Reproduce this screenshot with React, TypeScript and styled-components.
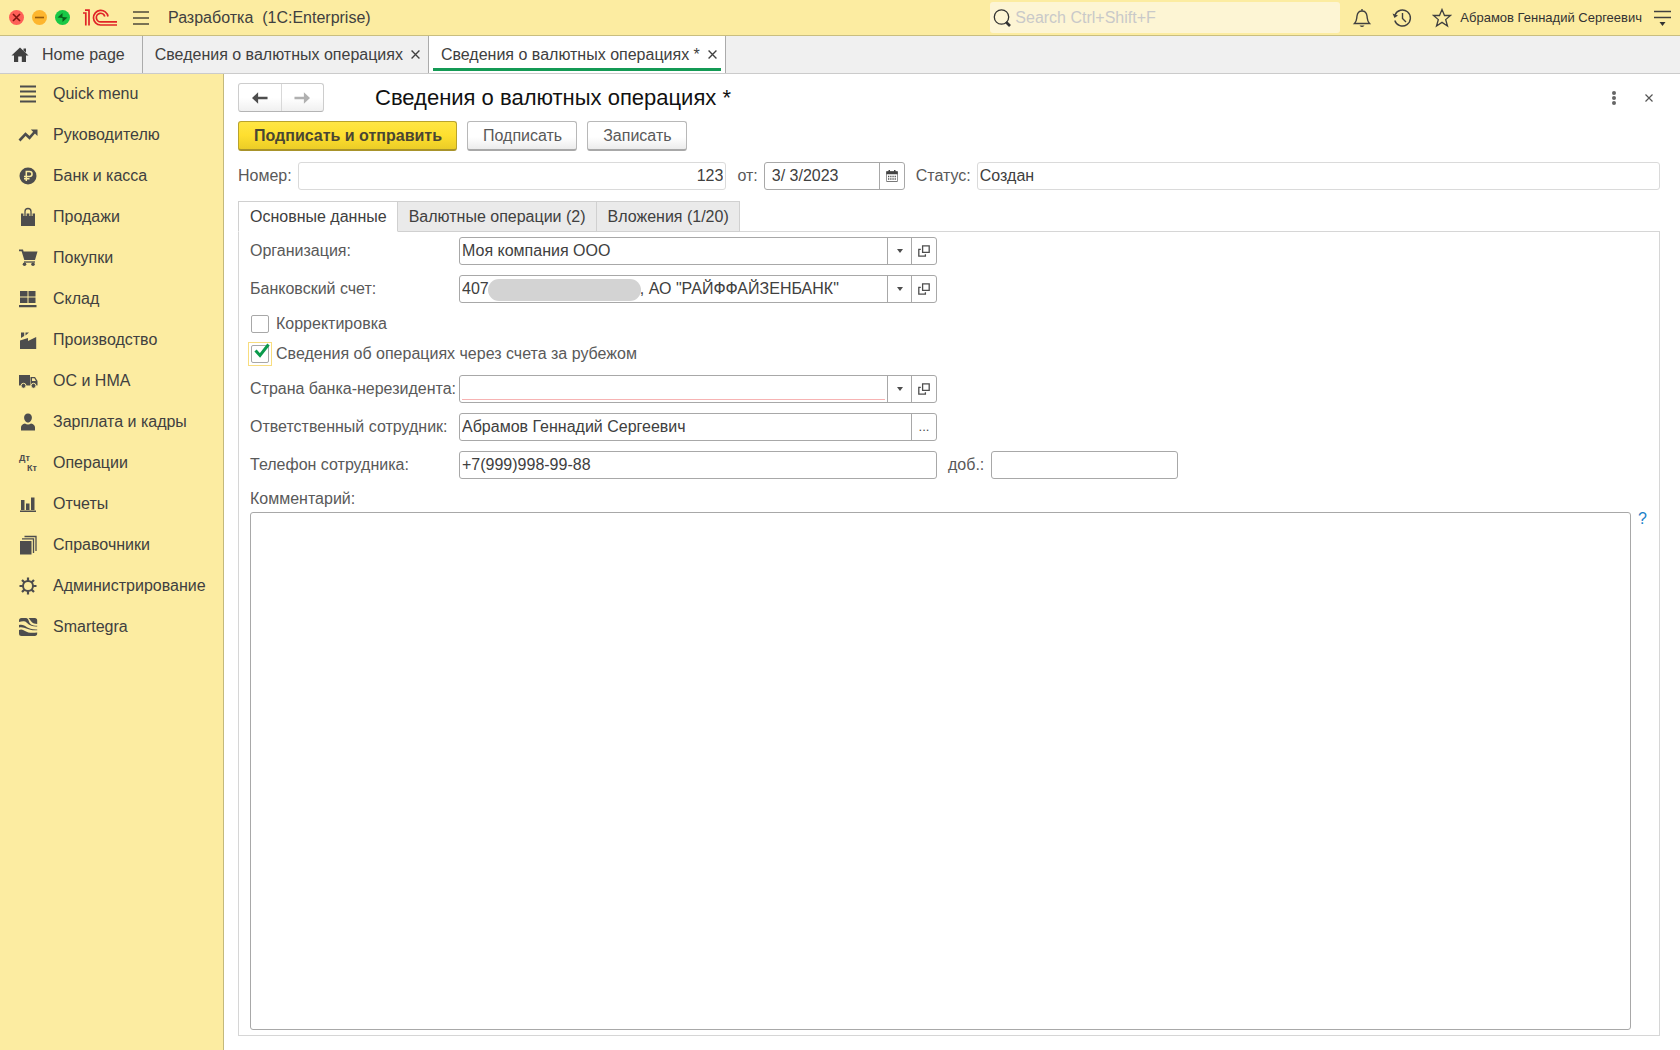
import React, { useState } from "react";
import styled, { createGlobalStyle, css } from "styled-components";

const GlobalStyle = createGlobalStyle`
  *, *::before, *::after { box-sizing: border-box; }
  body {
    margin: 0;
    background: #fff;
    color: #404040;
    font: 16px/20px "Liberation Sans", Arial, sans-serif;
  }
  button, input, select, textarea { font: inherit; color: inherit; margin: 0; }
  button { cursor: pointer; }
`;

const Shell = styled.div`
  min-height: 100vh;
  display: flex;
  flex-direction: column;
`;

/* ---------- title bar ---------- */

const TitleBar = styled.header`
  display: flex;
  align-items: center;
  height: 36px;
  padding: 0 9px;
  background: #fceca1;
  border-bottom: 1px solid #c9be80;
`;

const Lights = styled.div`
  display: flex;
  gap: 8px;
  margin-right: 13px;
`;

const Light = styled.button<{ $color: string }>`
  width: 15px;
  height: 15px;
  padding: 0;
  border: 0;
  border-radius: 50%;
  background: ${(p) => p.$color};
  svg { display: block; }
`;

const IconButton = styled.button`
  display: flex;
  align-items: center;
  justify-content: center;
  padding: 0;
  border: 0;
  background: none;
  color: #404040;
`;

const Brand = styled.div`
  display: flex;
  align-items: center;
  gap: 16px;
`;

const AppName = styled.span`
  margin-left: 3px;
  white-space: pre;
`;

const Search = styled.label`
  display: flex;
  align-items: center;
  gap: 3px;
  width: 350px;
  height: 31px;
  margin-left: auto;
  padding: 0 3px;
  border-radius: 3px;
  background: #fdf5d4;
`;

const SearchInput = styled.input`
  flex: 1;
  min-width: 0;
  padding: 0;
  border: 0;
  outline: 0;
  background: none;
  &::placeholder { color: #c9c9c9; opacity: 1; }
`;

const Tools = styled.div`
  display: flex;
  align-items: center;
  gap: 20px;
  margin: 0 8px 0 12px;
`;

const UserLink = styled.a`
  margin-right: 12px;
  font-size: 13px;
  color: #333;
  text-decoration: none;
`;

/* ---------- window tabs ---------- */

const WindowTabs = styled.nav`
  display: flex;
  height: 38px;
  background: #f0f0f0;
  border-bottom: 1px solid #cbcbcb;
`;

const WindowTab = styled.div<{ $active?: boolean }>`
  display: flex;
  align-items: center;
  gap: 8px;
  padding: 0 8px 0 12px;
  border-right: 1px solid #ababab;
  ${(p) =>
    p.$active &&
    css`
      background: linear-gradient(#149a55, #149a55) 4px 32px / calc(100% - 8px) 3px no-repeat #fff;
    `}
`;

const TabLink = styled.a`
  display: flex;
  align-items: center;
  gap: 13px;
  color: #404040;
  text-decoration: none;
  white-space: nowrap;
`;

const HomeTab = styled(WindowTab)`
  padding: 0 17px 0 11px;
`;

/* ---------- body ---------- */

const Body = styled.div`
  flex: 1;
  display: flex;
`;

const Sidebar = styled.nav`
  width: 224px;
  flex: none;
  background: #fceca1;
  border-right: 1px solid #c4b97c;
`;

const Menu = styled.ul`
  margin: -1px 0 0;
  padding: 0;
  list-style: none;
`;

const MenuLink = styled.a`
  display: flex;
  align-items: center;
  gap: 15px;
  height: 41px;
  padding-left: 18px;
  color: #404040;
  text-decoration: none;
  svg { flex: none; }
`;

const Ledger = styled.span`
  display: flex;
  flex-direction: column;
  justify-content: center;
  width: 20px;
  padding: 0 1px;
  font-size: 9px;
  line-height: 10px;
  font-weight: bold;
  color: #4d4d4d;
  span:last-child { align-self: flex-end; }
`;

const Page = styled.main`
  flex: 1;
  min-width: 0;
  display: flex;
  flex-direction: column;
  padding: 9px 20px 14px 14px;
`;

const Heading = styled.div`
  display: flex;
  align-items: center;
  height: 29px;
`;

const NavPair = styled.div`
  display: flex;
  height: 29px;
  width: 86px;
  border: 1px solid #cdcdcd;
  border-bottom-color: #b4b4b4;
  border-radius: 3px;
  background: linear-gradient(#fff 50%, #f0f0f0);
`;

const NavButton = styled.button`
  flex: 1;
  display: flex;
  align-items: center;
  justify-content: center;
  padding: 0;
  border: 0;
  background: none;
  color: #4d4d4d;
  & + & { border-left: 1px solid #d8d8d8; }
  &:disabled { color: #b0b0b0; }
`;

const Title = styled.h1`
  margin: 0 auto 0 51px;
  font-size: 22px;
  line-height: 26px;
  font-weight: normal;
  color: #111;
`;

const HeadTools = styled.div`
  display: flex;
  align-items: center;
  gap: 25px;
  padding-right: 7px;
  svg { color: #555; }
`;

const Commands = styled.div`
  display: flex;
  gap: 10px;
  margin-top: 9px;
`;

const Command = styled.button<{ $primary?: boolean }>`
  height: 30px;
  padding: 0 14px 0 15px;
  border: 1px solid #b8b8b8;
  border-bottom: 2px solid #a8a8a8;
  border-radius: 3px;
  background: linear-gradient(#fff 55%, #ececec);
  color: #595959;
  line-height: 20px;
  ${(p) =>
    p.$primary &&
    css`
      border-color: #b9a32c;
      border-bottom-color: #a8932a;
      background: linear-gradient(#ffe644, #fedf2f 50%, #ebcd27);
      color: #4a4632;
      font-weight: bold;
    `}
`;

const Summary = styled.div`
  display: flex;
  gap: 11px;
  margin: 11px 0;
`;

const Labelled = styled.div<{ $grow?: number }>`
  display: flex;
  align-items: center;
  gap: 6px;
  flex: ${(p) => (p.$grow ? `${p.$grow} 1 0` : "none")};
`;

const Label = styled.label`
  color: #595959;
  white-space: nowrap;
`;

const inputBox = css<{ $quiet?: boolean }>`
  height: 28px;
  border: 1px solid ${(p) => (p.$quiet ? "#dadada" : "#a8a8a8")};
  border-radius: 3px;
  background: #fff;
`;

const TextBox = styled.input<{ $quiet?: boolean; $right?: boolean; $width?: number }>`
  ${inputBox}
  min-width: 0;
  padding: 0 2px;
  outline: 0;
  text-align: ${(p) => (p.$right ? "right" : "left")};
  ${(p) => (p.$width ? `width: ${p.$width}px;` : "flex: 1;")}
`;

/* A framed field with cells for its buttons at the right end */
const Combo = styled.div<{ $width: number }>`
  ${inputBox}
  position: relative;
  display: grid;
  grid-template-columns: 1fr auto auto;
  width: ${(p) => p.$width}px;
`;

const ComboInput = styled.input<{ $pad?: number }>`
  grid-column: 1;
  min-width: 0;
  padding: 0 ${(p) => p.$pad ?? 2}px;
  border: 0;
  outline: 0;
  background: none;
`;

const ComboSelect = styled.select<{ $required?: boolean }>`
  grid-column: 1 / 3;
  grid-row: 1;
  min-width: 0;
  padding: 0 26px 0 2px;
  border: 0;
  outline: 0;
  appearance: none;
  background: ${(p) =>
    p.$required
      ? "linear-gradient(#f7b3b3, #f7b3b3) 2px 23px / calc(100% - 28px) 1px no-repeat"
      : "none"};
`;

const cell = css`
  display: flex;
  align-items: center;
  justify-content: center;
  width: 25px;
  border: 0;
  border-left: 1px solid #a8a8a8;
  color: #4d4d4d;
`;

const ArrowCell = styled.span`
  ${cell}
  grid-column: 2;
  grid-row: 1;
  width: 24px;
  pointer-events: none;
`;

const CellButton = styled.button`
  ${cell}
  grid-column: 3;
  padding: 0;
  background: none;
  font-size: 13px;
`;

const Redaction = styled.span`
  position: absolute;
  left: 28px;
  top: 3px;
  width: 153px;
  height: 22px;
  border-radius: 11px;
  background: #d3d3d3;
  pointer-events: none;
`;

const TabStrip = styled.div`
  display: flex;
  height: 31px;
  margin-bottom: -1px;
  z-index: 1;
`;

const FormTab = styled.button<{ $active?: boolean }>`
  padding: 1px 10px 0 11px;
  border: 1px solid #d0d0d0;
  border-left-width: ${(p) => (p.$active ? 1 : 0)}px;
  border-bottom-color: ${(p) => (p.$active ? "#fff" : "#d0d0d0")};
  background: ${(p) => (p.$active ? "#fff" : "#eaeaea")};
`;

const Panel = styled.section`
  flex: 1;
  display: flex;
  flex-direction: column;
  gap: 10px;
  padding: 5px 11px;
  border: 1px solid #d6d6d6;
`;

const Row = styled.div`
  display: flex;
  align-items: center;
`;

const RowLabel = styled(Label)`
  width: 209px;
`;

const Extension = styled(Labelled)`
  gap: 7px;
  margin-left: 11px;
`;

const Checks = styled.div`
  display: flex;
  flex-direction: column;
  align-items: flex-start;
  gap: 12px;
  padding: 2px 1px;
`;

const Check = styled.label`
  display: flex;
  align-items: center;
  gap: 7px;
  height: 18px;
  color: #595959;
`;

const Tick = styled.span<{ $focus?: boolean }>`
  position: relative;
  display: flex;
  outline: ${(p) => (p.$focus ? "1px solid #f8dd7f" : "0")};
  outline-offset: 2px;
  svg {
    position: absolute;
    left: 3px;
    top: -2px;
    pointer-events: none;
  }
`;

const TickInput = styled.input`
  appearance: none;
  width: 18px;
  height: 18px;
  border: 1px solid #a8a8a8;
  border-radius: 2px;
  background: #fff;
  outline: 0;
`;

const Comment = styled.div`
  flex: 1;
  display: flex;
  flex-direction: column;
  gap: 3px;
`;

const CommentRow = styled.div`
  flex: 1;
  display: flex;
  align-items: flex-start;
  gap: 7px;
  padding-right: 1px;
`;

const CommentBox = styled.textarea`
  flex: 1;
  align-self: stretch;
  padding: 2px;
  border: 1px solid #a8a8a8;
  border-radius: 3px;
  outline: 0;
  resize: none;
`;

const Help = styled.button`
  padding: 0;
  border: 0;
  background: none;
  color: #1b80c8;
  line-height: 14px;
`;

/* ---------- drawings ---------- */

const Logo = () => (
  <svg width="34" height="18" viewBox="0 0 34 18" fill="none" stroke="#e02427" strokeWidth="1.7" aria-label="1C">
    <path d="M0 4H2.8V16.6M2 1.2H6V16.6" />
    <path d="M25 7.5A7.3 7.3 0 1 0 17.5 16H34" />
    <path d="M21.8 7.5A4.3 4.3 0 1 0 17.8 12.9H34" />
  </svg>
);

const Cross = ({ size = 8 }: { size?: number }) => (
  <svg width={size} height={size} viewBox="0 0 8 8" stroke="currentColor" strokeWidth="1.2">
    <path d="M.5.5l7 7M7.5.5l-7 7" />
  </svg>
);

const Arrow = ({ flip }: { flip?: boolean }) => (
  <svg width="16" height="12" viewBox="0 0 17 12" fill="currentColor">
    <path transform={flip ? "matrix(-1 0 0 1 17 0)" : undefined} d="M0 6L6.5 0V4.6H16.5V7.4H6.5V12z" />
  </svg>
);

const Caret = () => (
  <svg width="6" height="4" viewBox="0 0 6 4" fill="currentColor">
    <path d="M0 0h6L3 4z" />
  </svg>
);

const OpenIcon = () => (
  <svg width="12" height="12" viewBox="0 0 12 12" fill="none" stroke="currentColor" strokeWidth="1.3">
    <path d="M4.6.8h6.6v6.6H4.6zM2.8 4.4H.8v6.8h6.6V9.2" />
  </svg>
);

const CalendarIcon = () => (
  <svg width="12" height="12" viewBox="0 0 12 12">
    <path d="M1 1.5h10q.7 0 .7.7v8.6q0 .7-.7.7H1q-.7 0-.7-.7V2.2q0-.7.7-.7z" fill="none" stroke="#555" strokeWidth=".8" />
    <path d="M.3 1.5h11.4v2.8H.3zM2.5 0H4v2H2.500zM8 0h1.500v2H8z" fill="#444" />
    <path d="M2 6.500h8M2 9h8" stroke="#555" strokeWidth="1.300" strokeDasharray="1.300 .9" />
  </svg>
);

const sideIcons: Record<string, React.ReactNode> = {
  menu: <path d="M2 2.500h16M2 7.500h16M2 12.500h16M2 17.500h16" stroke="#4d4d4d" strokeWidth="2.200" />,
  trend: (
    <>
      <path d="M1.500 15.500L7.500 9l4 3.800L17 6.500" fill="none" stroke="#4d4d4d" strokeWidth="2.600" />
      <path d="M12.800 4.500H19.500V11z" />
    </>
  ),
  ruble: (
    <>
      <circle cx="10" cy="10" r="8.500" />
      <path d="M8.300 15V5.500h3.200a2.500 2.500 0 0 1 0 5.100H6M6 12.800h5.500" fill="none" stroke="#fceca1" strokeWidth="1.500" />
    </>
  ),
  bag: (
    <>
      <path d="M3 6.500h14V19H3z" />
      <path d="M7 9V4.500a3 3 0 0 1 6 0V9" fill="none" stroke="#fceca1" strokeWidth="3.200" />
      <path d="M7 9V4.500a3 3 0 0 1 6 0V9" fill="none" stroke="#4d4d4d" strokeWidth="1.300" />
    </>
  ),
  cart: (
    <>
      <path d="M1 1.500h4l.6 2H19.500L17 12H6.300L3.600 3.200H1z" />
      <path d="M6 14h11" stroke="#4d4d4d" strokeWidth="1.300" />
      <circle cx="6.500" cy="16.300" r="1.800" />
      <circle cx="15" cy="16.300" r="1.800" />
    </>
  ),
  store: <path d="M2 2h7.500v5.500H2zM10.500 2h7v5.500h-7zM2 8.500h7.500V14H2zM10.500 8.500h7V14h-7zM1 16h17.500v2.300H1z" />,
  factory: <path d="M2 19v-8.500l8-2.500v3l8.200-4V19zM3 2.500h3.200V6L3 8zM7.500 2.500H11l-3.500 3z" />,
  truck: (
    <>
      <path d="M1 4h11v10.500H1zM12.500 6H17l2.500 4v4.500h-7z" />
      <path d="M14 7.300h2.400l1.500 2.700H14z" fill="#fceca1" />
      <circle cx="5.500" cy="14.800" r="2.500" stroke="#fceca1" />
      <circle cx="15.500" cy="14.800" r="2.500" stroke="#fceca1" />
    </>
  ),
  person: (
    <path d="M10 1.500c2.500 0 3.900 1.700 3.900 4s-1.400 5-3.900 5-3.900-2.700-3.900-5 1.400-4 3.900-4zM3 18.500v-3c0-2 1.500-3.500 4-4 1.500 1.200 4.500 1.200 6 0 2.500.5 4 2 4 4v3z" />
  ),
  chart: <path d="M3 6h3.500v10H3zM8 9.500h3.500V16H8zM13 3.500h3.500V16H13zM2 16.500h16V18H2z" />,
  books: (
    <>
      <path d="M2 6h11.500v13.500H2z" />
      <path d="M4 3.800h11.500V18M6.500 1.500H18V16" fill="none" stroke="#4d4d4d" strokeWidth="1.300" />
    </>
  ),
  gear: (
    <>
      <circle cx="10" cy="10" r="5" fill="none" stroke="#4d4d4d" strokeWidth="2" />
      <path
        d="M10 1.500V5M10 15v3.500M1.500 10H5M15 10h3.500M4 4l2.400 2.400M13.600 13.600L16 16M4 16l2.400-2.400M13.600 6.400L16 4"
        stroke="#4d4d4d"
        strokeWidth="2.200"
      />
    </>
  ),
  smartegra: (
    <>
      <path d="M1 5V3.500Q1 1 3.500 1H8c3 0 2 4 5 6.500 1.500 1 3.500 1.200 6.200 1.300V9.500C11 10 9 5 7 4.500 5 4 3 4.500 1 5zM10.500 1h6.200q2.500 0 2.500 2.500V7c-5 0-6-3-8.700-6z" />
      <path d="M1 8c7-1.500 7 5 18.200 4.500v.8C9 14 8 9.500 1 10.500zM1 13c2-1 4-.5 6 1 3 2 7 2 12.200 1.500v.8q0 2.700-2.500 2.700H3.500Q1 19 1 16.500z" />
    </>
  ),
};

const SideIcon = ({ name }: { name: string }) => (
  <svg width="20" height="20" viewBox="0 0 20 20" fill="#4d4d4d" aria-hidden="true">
    {sideIcons[name]}
  </svg>
);

const menu: [string, string][] = [
  ["menu", "Quick menu"],
  ["trend", "Руководителю"],
  ["ruble", "Банк и касса"],
  ["bag", "Продажи"],
  ["cart", "Покупки"],
  ["store", "Склад"],
  ["factory", "Производство"],
  ["truck", "ОС и НМА"],
  ["person", "Зарплата и кадры"],
  ["ledger", "Операции"],
  ["chart", "Отчеты"],
  ["books", "Справочники"],
  ["gear", "Администрирование"],
  ["smartegra", "Smartegra"],
];

const formTabs = ["Основные данные", "Валютные операции (2)", "Вложения (1/20)"];

const account = "407" + "\u00a0".repeat(34) + ', АО "РАЙФФАЙЗЕНБАНК"';

interface PickerProps {
  id: string;
  label: string;
  value: string;
  required?: boolean;
  children?: React.ReactNode;
}

const Picker = ({ id, label, value, required, children }: PickerProps) => (
  <Row>
    <RowLabel htmlFor={id}>{label}</RowLabel>
    <Combo $width={478}>
      <ComboSelect id={id} $required={required}>
        <option>{value}</option>
      </ComboSelect>
      <ArrowCell>
        <Caret />
      </ArrowCell>
      <CellButton type="button" aria-label="Открыть">
        <OpenIcon />
      </CellButton>
      {children}
    </Combo>
  </Row>
);

export default function App() {
  const [correction, setCorrection] = useState(false);
  const [abroad, setAbroad] = useState(true);
  const [tab, setTab] = useState(0);

  const tickMark = (
    <svg width="16" height="16" viewBox="0 0 16 16" fill="none" stroke="#0b9a4c" strokeWidth="3">
      <path d="M1.500 7.500l4.500 5L14.500 1.500" />
    </svg>
  );

  return (
    <>
      <GlobalStyle />
      <Shell>
        <TitleBar>
          <Lights>
            <Light $color="#fe5f57" aria-label="Close">
              <svg width="15" height="15" viewBox="0 0 15 15" stroke="#7e1410" strokeWidth="1.600">
                <path d="M4 4l7 7M11 4l-7 7" />
              </svg>
            </Light>
            <Light $color="#fdb62e" aria-label="Minimize">
              <svg width="15" height="15" viewBox="0 0 15 15" stroke="#955c0c" strokeWidth="1.600">
                <path d="M3 7.500h9" />
              </svg>
            </Light>
            <Light $color="#1ac846" aria-label="Zoom">
              <svg width="15" height="15" viewBox="0 0 15 15" fill="#0b5f1b">
                <path d="M7.500 3v5L2.500 7.500zM7.500 7l5 .5-5 4.500z" />
              </svg>
            </Light>
          </Lights>
          <Brand>
            <Logo />
            <IconButton aria-label="Menu">
              <svg width="16" height="14" viewBox="0 0 16 14" stroke="#4d4a3a" strokeWidth="1.300">
                <path d="M0 1h16M0 7h16M0 13h16" />
              </svg>
            </IconButton>
            <AppName>{"Разработка\u00a0 (1C:Enterprise)"}</AppName>
          </Brand>
          <Search>
            <svg width="19" height="20" viewBox="0 0 19 20" fill="none" stroke="#333">
              <circle cx="8.500" cy="9" r="7.200" strokeWidth="1.300" />
              <path d="M13 14l4 4" strokeWidth="2.600" />
            </svg>
            <SearchInput type="search" aria-label="Search" placeholder="Search Ctrl+Shift+F" />
          </Search>
          <Tools>
            <IconButton aria-label="Notifications">
              <svg width="20" height="20" viewBox="0 0 20 20" fill="none" stroke="#404040" strokeWidth="1.400">
                <path d="M2.500 15.500C5 13 4.500 11 5 8c.4-3 2-5 5-5s4.600 2 5 5c.5 3 0 5 2.500 7.500zM10 3V1" />
                <path d="M7.500 17.500h5q-2.500 3-5 0z" fill="#404040" stroke="none" />
              </svg>
            </IconButton>
            <IconButton aria-label="History">
              <svg width="20" height="20" viewBox="0 0 20 20" fill="none" stroke="#404040" strokeWidth="1.400">
                <path d="M3 7a8 8 0 1 1-.2 5.500" />
                <path d="M10.500 5v5.500l3.500 3.500" />
                <path d="M.5 5.500L6 7.500 2.500 10z" fill="#404040" stroke="none" />
              </svg>
            </IconButton>
            <IconButton aria-label="Favorites">
              <svg width="20" height="20" viewBox="0 0 20 20" fill="none" stroke="#404040" strokeWidth="1.300">
                <path d="M10 1.500l2.500 6h6l-4.800 4.100 1.800 6.400-5.500-3.600L4.500 18l1.800-6.400L1.500 7.500h6z" />
              </svg>
            </IconButton>
          </Tools>
          <UserLink href="#user">Абрамов Геннадий Сергеевич</UserLink>
          <IconButton aria-label="Service menu">
            <svg width="17" height="16" viewBox="0 0 17 16">
              <path d="M0 1.500h17M0 7.500h17" stroke="#404040" strokeWidth="1.300" />
              <path d="M5.500 12h6l-3 4z" fill="#333" />
            </svg>
          </IconButton>
        </TitleBar>

        <WindowTabs>
          <HomeTab>
            <TabLink href="#home">
              <svg width="18" height="16" viewBox="0 0 18 16" fill="#404040">
                <path d="M9 .5l8.500 8H15V15h-4.200V9.500H7.200V15H3V8.500H.5zM12.500 1.500H15v4l-2.500-2z" />
              </svg>
              Home page
            </TabLink>
          </HomeTab>
          <WindowTab>
            <TabLink href="#list">Сведения о валютных операциях</TabLink>
            <IconButton aria-label="Close tab">
              <Cross size={9} />
            </IconButton>
          </WindowTab>
          <WindowTab $active>
            <TabLink href="#item">Сведения о валютных операциях *</TabLink>
            <IconButton aria-label="Close tab">
              <Cross size={9} />
            </IconButton>
          </WindowTab>
        </WindowTabs>

        <Body>
          <Sidebar>
            <Menu>
              {menu.map(([icon, text]) => (
                <li key={text}>
                  <MenuLink href={`#${icon}`}>
                    {icon === "ledger" ? (
                      <Ledger>
                        <span>Дт</span>
                        <span>Кт</span>
                      </Ledger>
                    ) : (
                      <SideIcon name={icon} />
                    )}
                    {text}
                  </MenuLink>
                </li>
              ))}
            </Menu>
          </Sidebar>

          <Page>
            <Heading>
              <NavPair>
                <NavButton aria-label="Back">
                  <Arrow />
                </NavButton>
                <NavButton aria-label="Forward" disabled>
                  <Arrow flip />
                </NavButton>
              </NavPair>
              <Title>Сведения о валютных операциях *</Title>
              <HeadTools>
                <IconButton aria-label="More">
                  <svg width="12" height="14" viewBox="0 0 12 14" fill="#666">
                    <circle cx="6" cy="2" r="2" />
                    <circle cx="6" cy="7" r="2" />
                    <circle cx="6" cy="12" r="2" />
                  </svg>
                </IconButton>
                <IconButton aria-label="Close form">
                  <Cross />
                </IconButton>
              </HeadTools>
            </Heading>

            <Commands>
              <Command $primary>Подписать и отправить</Command>
              <Command>Подписать</Command>
              <Command>Записать</Command>
            </Commands>

            <Summary>
              <Labelled $grow={21}>
                <Label htmlFor="number">Номер:</Label>
                <TextBox id="number" $quiet $right readOnly defaultValue="123" />
              </Labelled>
              <Labelled>
                <Label htmlFor="date">от:</Label>
                <Combo $width={141}>
                  <ComboInput id="date" $pad={7} defaultValue="3/ 3/2023" />
                  <CellButton type="button" aria-label="Календарь">
                    <CalendarIcon />
                  </CellButton>
                </Combo>
              </Labelled>
              <Labelled $grow={32}>
                <Label htmlFor="status">Статус:</Label>
                <TextBox id="status" $quiet readOnly defaultValue="Создан" />
              </Labelled>
            </Summary>

            <TabStrip role="tablist">
              {formTabs.map((name, i) => (
                <FormTab key={name} role="tab" aria-selected={tab === i} $active={tab === i} onClick={() => setTab(i)}>
                  {name}
                </FormTab>
              ))}
            </TabStrip>

            <Panel>
              <Picker id="org" label="Организация:" value="Моя компания ООО" />
              <Picker id="account" label="Банковский счет:" value={account}>
                <Redaction />
              </Picker>
              <Checks>
                <Check>
                  <Tick>
                    <TickInput type="checkbox" checked={correction} onChange={(e) => setCorrection(e.target.checked)} />
                    {correction && tickMark}
                  </Tick>
                  Корректировка
                </Check>
                <Check>
                  <Tick $focus>
                    <TickInput type="checkbox" checked={abroad} onChange={(e) => setAbroad(e.target.checked)} />
                    {abroad && tickMark}
                  </Tick>
                  Сведения об операциях через счета за рубежом
                </Check>
              </Checks>
              <Picker id="country" label="Страна банка-нерезидента:" value="" required />
              <Row>
                <RowLabel htmlFor="employee">Ответственный сотрудник:</RowLabel>
                <Combo $width={478}>
                  <ComboInput id="employee" defaultValue="Абрамов Геннадий Сергеевич" />
                  <CellButton type="button">...</CellButton>
                </Combo>
              </Row>
              <Row>
                <RowLabel htmlFor="phone">Телефон сотрудника:</RowLabel>
                <TextBox id="phone" $width={478} defaultValue="+7(999)998-99-88" />
                <Extension>
                  <Label htmlFor="ext">доб.:</Label>
                  <TextBox id="ext" $width={187} />
                </Extension>
              </Row>
              <Comment>
                <Label htmlFor="comment">Комментарий:</Label>
                <CommentRow>
                  <CommentBox id="comment" />
                  <Help type="button">?</Help>
                </CommentRow>
              </Comment>
            </Panel>
          </Page>
        </Body>
      </Shell>
    </>
  );
}
